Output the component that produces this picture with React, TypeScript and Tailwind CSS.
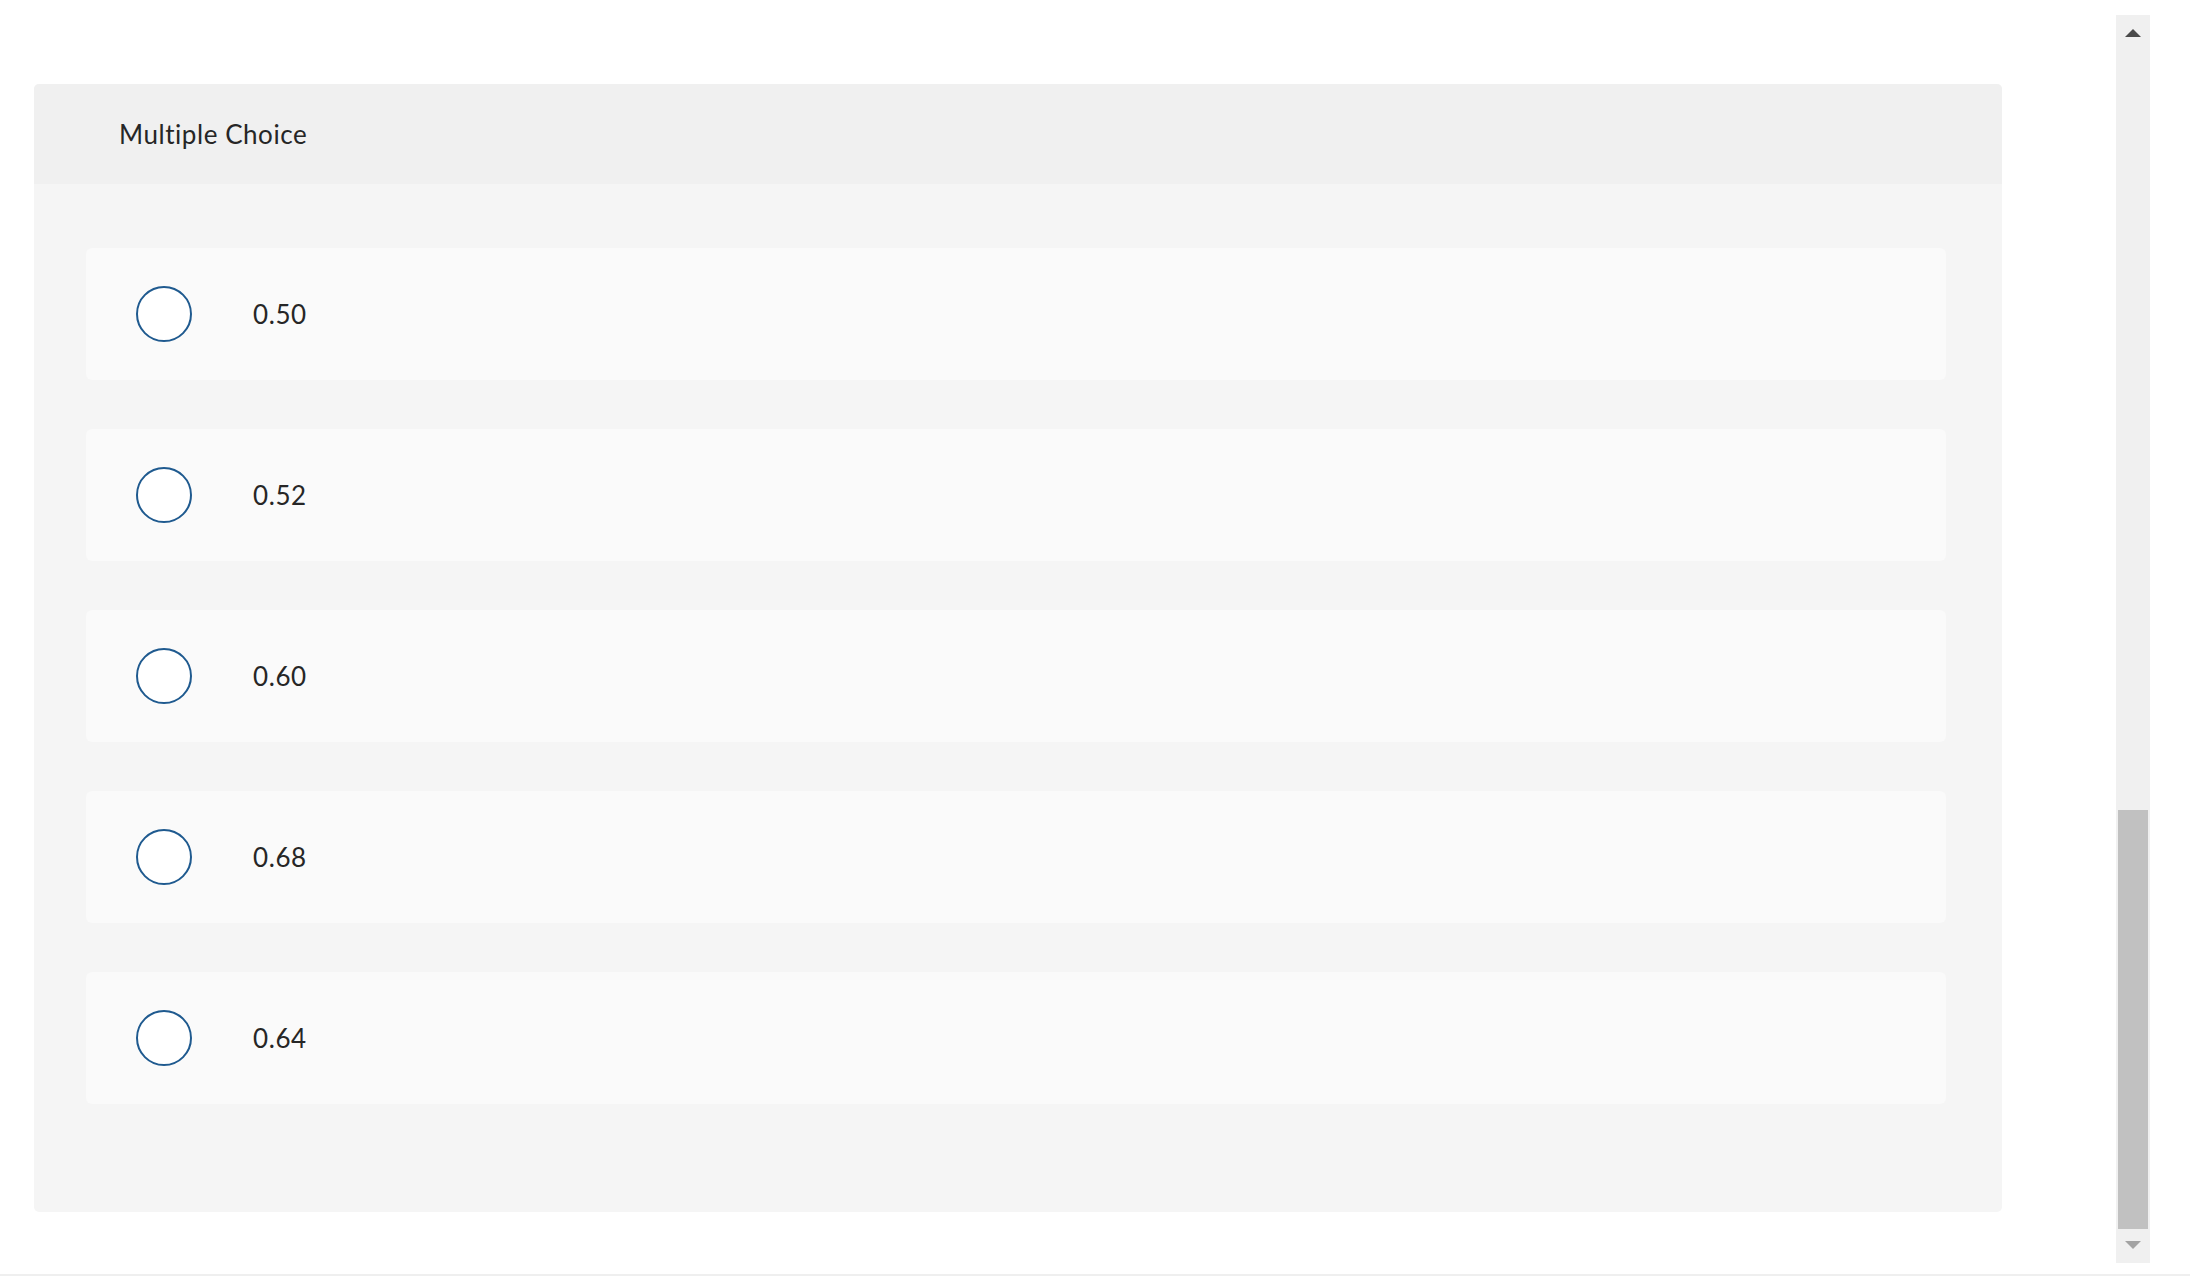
import React from 'react';

const options = ['0.50', '0.52', '0.60', '0.68', '0.64'];

export default function App() {
  return (
    <div
      className="h-[1288px] w-[2190px] bg-white flex flex-col overflow-hidden"
      style={{ fontFamily: 'Lato, "Liberation Sans", sans-serif' }}
    >
      <div className="flex h-[1274px]">
        {/* Question */}
        <div className="flex-1 pl-[34px] pt-[84px]">
          <div className="w-[1968px] rounded-[5px] overflow-hidden bg-[#f5f5f5]">
            <div className="h-[100px] bg-[#f0f0f0] flex items-center pl-[85px]">
              <span className="text-[26px] tracking-[0.55px] text-[#262626]">Multiple Choice</span>
            </div>
            <div className="pl-[52px] pr-[56px] pt-[64px] pb-[108px] flex flex-col gap-[49px]">
              {options.map((opt) => (
                <label
                  key={opt}
                  className="h-[132px] bg-[#fafafa] rounded-[6px] flex items-center pl-[50px] cursor-pointer"
                >
                  <span className="w-[56px] h-[56px] rounded-full border-[2px] border-[#1f5a8f] bg-white shrink-0" />
                  <span className="ml-[61px] text-[26px] tracking-[0.6px] text-[#262626]">{opt}</span>
                </label>
              ))}
            </div>
          </div>
        </div>

        {/* Scrollbar */}
        <div className="w-[34px] mt-[15px] h-[1248px] mr-[40px] bg-[#f0f0f0] flex flex-col items-center">
          <div className="h-[36px] flex items-center justify-center">
            <div className="w-0 h-0 border-l-[8px] border-r-[8px] border-b-[8px] border-l-transparent border-r-transparent border-b-[#4a4a4a]" />
          </div>
          <div className="flex-1 w-full" />
          <div className="w-[30px] h-[419px] bg-[#c1c1c1]" />
          <div className="h-[34px] pt-[12px] flex justify-center">
            <div className="w-0 h-0 border-l-[8px] border-r-[8px] border-t-[8px] border-l-transparent border-r-transparent border-t-[#a3a3a3]" />
          </div>
        </div>
      </div>
      <div className="h-[2px] bg-[#efefef]" />
    </div>
  );
}
